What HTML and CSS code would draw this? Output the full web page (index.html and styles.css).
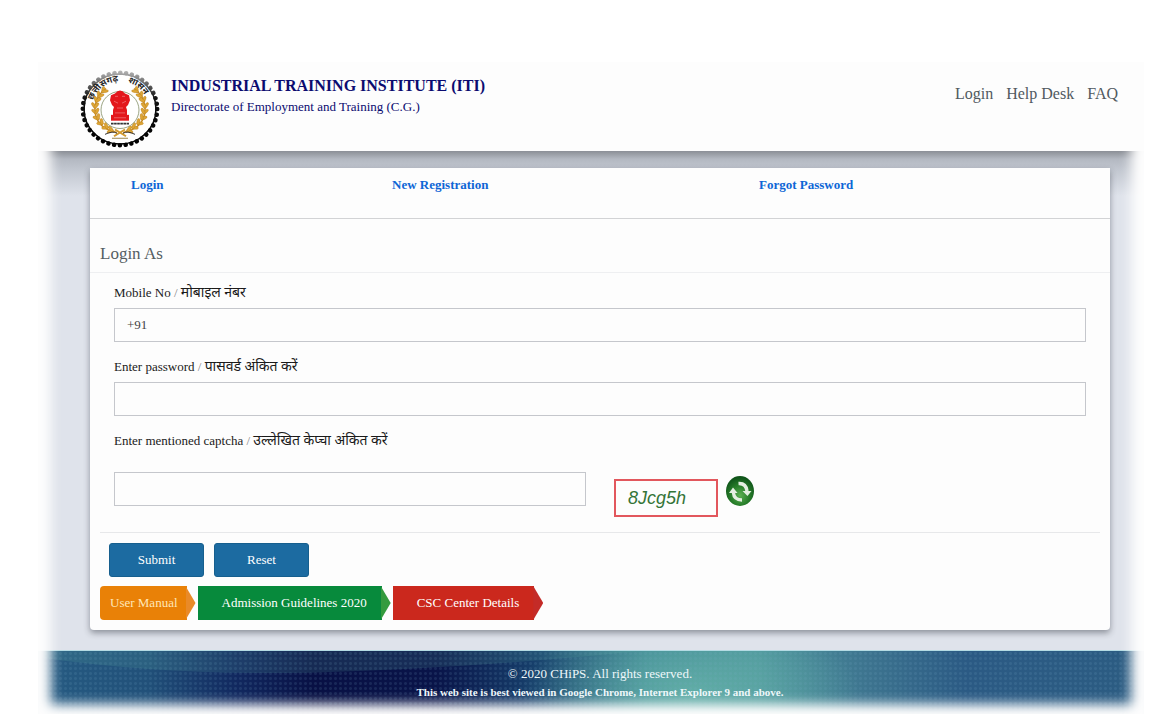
FILE: index.html
```html
<!DOCTYPE html>
<html lang="en">
<head>
<meta charset="utf-8">
<meta name="viewport" content="width=device-width, initial-scale=1">
<title>Industrial Training Institute (ITI) - Login</title>
<link rel="stylesheet" href="styles.css">
</head>
<body>
<div class="page">
  <header class="site-header">
    <svg class="emblem" viewBox="0 0 80 80" preserveAspectRatio="none" role="img" aria-label="Chhattisgarh state emblem">
      <defs>
        <linearGradient id="rim" x1="0" y1="0" x2="0" y2="80" gradientUnits="userSpaceOnUse">
          <stop offset="0" stop-color="#bbb"/><stop offset=".14" stop-color="#777"/><stop offset=".36" stop-color="#111"/><stop offset="1" stop-color="#000"/>
        </linearGradient>
        <path id="arc" d="M13 31A28.500 28.500 0 0 1 67 31"/>
        <g id="leaf"><ellipse cx="0" cy="-2" rx="1.500" ry="3.400" transform="rotate(-38)"/><ellipse cx="0" cy="-2" rx="1.500" ry="3.400" transform="rotate(38)"/></g>
        <g id="branch" fill="#dda636" stroke="#b77b18" stroke-width=".4">
          <path d="M37 64C19 61 12 47 16 33Q18 25 26 19" fill="none" stroke="#c88b22" stroke-width="1.500"/>
          <use href="#leaf" transform="translate(32 62) rotate(-75)"/><use href="#leaf" transform="translate(27 59) rotate(-60)"/>
          <use href="#leaf" transform="translate(22 55) rotate(-48)"/><use href="#leaf" transform="translate(18 50) rotate(-30)"/>
          <use href="#leaf" transform="translate(16 44) rotate(-12)"/><use href="#leaf" transform="translate(15 38) rotate(3)"/>
          <use href="#leaf" transform="translate(16.500 32) rotate(18)"/><use href="#leaf" transform="translate(19 27) rotate(30)"/>
          <use href="#leaf" transform="translate(23 22) rotate(45)"/>
        </g>
      </defs>
      <circle cx="40" cy="40" r="36" fill="#fff" stroke="url(#rim)" stroke-width="1.600"/>
      <circle cx="40" cy="40" r="37.200" fill="none" stroke="url(#rim)" stroke-width="4.600" stroke-linecap="round" stroke-dasharray="0.010 5.834"/>
      <text class="emblem-text"><textPath href="#arc" startOffset="0">छत्तीसगढ़</textPath></text>
      <text class="emblem-text"><textPath href="#arc" startOffset="43">शासन</textPath></text>
      <use href="#branch"/><use href="#branch" transform="matrix(-1 0 0 1 80 0)"/>
      <circle cx="40" cy="41" r="19" fill="#fff" stroke="#6f7c4c" stroke-width=".7"/>
      <g fill="#e3171c">
        <path d="M35 24Q40 18 45 24L49 26 50 31 48 36 46 38 47 41 47 47H33L33 41 34 38 32 36 30 31 31 26Z"/>
        <path d="M31 46H49V52H31Z"/>
      </g>
      <path d="M35 27H38M42 27H45M34 32L38 34M46 32L42 34M37 39H43M35 44H45M34 49H46" stroke="#fff" stroke-opacity=".4" stroke-width=".8"/>
      <path d="M31 55H49" stroke="#333" stroke-width="1.800" stroke-dasharray="2.600 .5"/>
      <path d="M34 68L45 61M46 68L35 61" stroke="#d29a2d" stroke-width="2"/>
      <path d="M25 66Q33 62 37 65M43 65Q47 62 55 66" fill="none" stroke="#333"/>
      <path d="M32 70H48" stroke="#998348" stroke-width="1"/>
    </svg>
    <div class="brand">
      <h1>INDUSTRIAL TRAINING INSTITUTE (ITI)</h1>
      <p>Directorate of Employment and Training (C.G.)</p>
    </div>
    <nav class="top-nav"><a href="#">Login</a><a href="#">Help Desk</a><a href="#">FAQ</a></nav>
  </header>
  <div class="content">
    <main class="main">
      <section class="card">
        <nav class="tabs"><a href="#">Login</a><a href="#">New Registration</a><a href="#">Forgot Password</a></nav>
        <h2>Login As</h2>
        <form class="form">
          <div class="fields">
            <label for="mobile">Mobile No <span class="slash">/</span> <span class="hindi" lang="hi">मोबाइल नंबर</span></label>
            <input id="mobile" type="text" value="+91">
            <label for="password">Enter password <span class="slash">/</span> <span class="hindi" lang="hi">पासवर्ड अंकित करें</span></label>
            <input id="password" type="password">
            <label for="captcha">Enter mentioned captcha <span class="slash">/</span> <span class="hindi" lang="hi">उल्लेखित केप्चा अंकित करें</span></label>
            <div class="captcha-row">
              <input id="captcha" type="text">
              <div class="captcha">8Jcg5h</div>
              <button class="refresh" type="button" aria-label="Refresh captcha">
                <svg viewBox="0 0 28 30">
                  <defs><radialGradient id="green" cx=".5" cy=".65" r=".6"><stop stop-color="#5cb052"/><stop offset=".55" stop-color="#287e2a"/><stop offset="1" stop-color="#10551a"/></radialGradient></defs>
                  <ellipse cx="14" cy="15" rx="14" ry="15" fill="url(#green)"/>
                  <path d="M12.500 7.500Q20 7 21 15" fill="none" stroke="#e5efe2" stroke-width="3.400"/>
                  <path d="M16.500 15H25.500L21.500 20Z" fill="#e5efe2"/>
                  <path d="M16 24Q8 24 7.500 17" fill="none" stroke="#e5efe2" stroke-width="3.400"/>
                  <path d="M3 17H11.500L7 11.500Z" fill="#e5efe2"/>
                </svg>
              </button>
            </div>
          </div>
          <div class="actions"><button class="btn" type="submit">Submit</button><button class="btn" type="reset">Reset</button></div>
        </form>
        <div class="docs">
          <a class="doc manual" href="#">User Manual</a><a class="doc guide" href="#">Admission Guidelines 2020</a><a class="doc csc" href="#">CSC Center Details</a>
        </div>
      </section>
    </main>
    <footer class="footer">
      <svg class="wave" viewBox="0 0 1100 64" preserveAspectRatio="none" aria-hidden="true"><path d="M0 6Q130 24 270 21Q430 17 600 0H0Z" fill="#62b2a5" fill-opacity=".16"/></svg>
      <p>© 2020 CHiPS. All rights reserved.</p>
      <p class="note">This web site is best viewed in Google Chrome, Internet Explorer 9 and above.</p>
    </footer>
  </div>
</div>
</body>
</html>
```
FILE: styles.css
```css
* { box-sizing: border-box; }
body { margin: 0; background: #fff; color: #1a1a1a; font: 13px/20px "Liberation Serif", "Noto Sans", serif; }
a { text-decoration: none; }
h1, h2, p { margin: 0; }
input, button { font: inherit; }
.page { margin: 62px 32px 0 38px; background: #fdfdfd; }

.site-header { position: relative; z-index: 2; display: flex; align-items: flex-start; height: 89px; padding: 8px 26px 0 42px; background: #fdfdfd; }
.emblem { width: 80px; height: 78px; flex: none; }
.emblem-text { font: bold 9px "Noto Sans", sans-serif; fill: #282828; }
.brand { margin: 5px 0 0 11px; color: #0b0b70; }
.brand h1 { font-size: 16px; line-height: 22px; }
.brand p { line-height: 20px; }
.top-nav { display: flex; gap: 13px; margin: 14px 0 0 auto; font-size: 16px; }
.top-nav a { color: #505960; }

.content { position: relative; }
.content::after { content: ""; position: absolute; inset: -40px 0 0; box-shadow: inset 0 0 12px 13px #fdfdfd; pointer-events: none; }
.main { padding: 17px 34px 20px 52px; background: linear-gradient(#8b8f96, #b3b8c1 8px, #c0c5ce 17px, #dfe3eb 45px); }
.card { background: #fdfdfd; border-radius: 0 0 4px 4px; box-shadow: 0 3px 6px rgba(40, 45, 55, .45); }
.tabs { display: grid; grid-template-columns: 261fr 367fr 351fr; height: 51px; padding: 7px 0 0 41px; border-bottom: 1px solid #d2d3d5; font-weight: bold; }
.tabs a { color: #0d66d6; }
.card h2 { height: 54px; padding: 24px 10px 0; border-bottom: 1px solid #eeeff1; color: #555d63; font-size: 17px; font-weight: normal; line-height: 22px; }
.form { padding: 0 10px; }
.fields { padding: 10px 14px 15px; border-bottom: 1px solid #e7e8ea; }
.fields label { display: block; height: 25px; }
.hindi { font-size: 14px; }
.slash { color: #888; }
.fields input { display: block; width: 100%; height: 34px; margin-bottom: 15px; padding: 0 12px; border: 1px solid #c5c7cc; background: #fdfdfd; color: #444; }
.fields .captcha-row { display: flex; align-items: flex-start; margin-top: 16px; }
.captcha-row #captcha { width: 472px; max-width: 49%; margin: 0; }
.captcha { width: 104px; height: 38px; margin: 7px 8px 0 28px; padding-left: 12px; border: 2px solid #e2575d; color: #347437; font: italic 18px/34px "Liberation Sans Narrow", "Liberation Sans", sans-serif; }
.refresh { width: 28px; height: 30px; margin-top: 4px; padding: 0; border: 0; background: none; }
.refresh svg { display: block; width: 100%; height: 100%; }
.actions { display: flex; gap: 10px; padding: 10px 9px 9px; }
.btn { width: 95px; height: 34px; border: 1px solid #165f8e; border-radius: 3px; background: #1c6ba1; color: #fff; }
.docs { display: flex; gap: 2px; padding: 0 10px 10px; }
.doc { display: flex; height: 34px; color: #fff; line-height: 34px; background: linear-gradient(var(--fill), var(--fill)) 0 0 / calc(100% - 9px) 100% no-repeat; }
.doc::after { content: ""; width: 10px; background: var(--tip); clip-path: polygon(0 0, 100% 50%, 0 100%); }
.manual { --fill: #e98107; --tip: #e98a28; gap: 8px; padding-left: 10px; border-radius: 4px 0 0 4px; color: #ffe7b7; }
.guide { --fill: #078a3c; --tip: #349b3e; gap: 14px; padding-left: 24px; }
.csc { --fill: #cb281d; --tip: #c42b27; gap: 14px; padding-left: 24px; }

.footer { position: relative; padding: 14px 0 16px 18px; border-top: 1px solid #b4dbe3; color: #eef7fa; text-align: center;
  background:
    radial-gradient(circle, rgba(120, 170, 200, .14) 1px, transparent 2px) 0 0 / 5px 5px,
    radial-gradient(ellipse 170px 80px at 59% 65%, rgba(104, 182, 170, .8), transparent),
    linear-gradient(90deg, #265b82 0, #215079 10%, #11285f 18%, #081044 25%, #091449 36%, #17406c 45%, #3f8795 55%, #4d949c 65%, #3d748f 75%, #2b5a84 84%, #2c5c82 100%); }
.wave { position: absolute; inset: 0; width: 100%; height: 100%; }
.footer p { position: relative; line-height: 18px; }
.footer .note { font-size: 11px; font-weight: bold; }
```
